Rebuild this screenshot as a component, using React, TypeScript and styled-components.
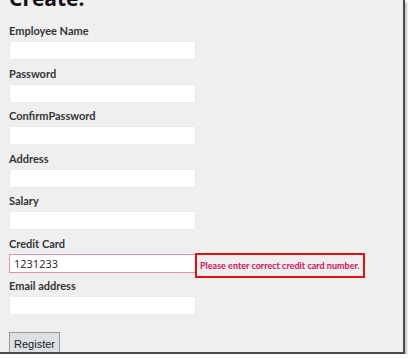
import styled, { createGlobalStyle } from 'styled-components';

const GlobalStyle = createGlobalStyle`
  html, body {
    margin: 0;
    padding: 0;
    background: #ffffff;
  }
  body {
    font-family: 'Lato', 'Liberation Sans', sans-serif;
    overflow: hidden;
  }
`;

const Frame = styled.div`
  width: 405px;
  height: 354px;
  box-sizing: border-box;
  background: #efefef;
  border-right: 2px solid #4a4a4a;
  border-bottom: 2px solid #4a4a4a;
  box-shadow: 2px 2px 2px rgba(0, 0, 0, 0.25);
  padding-left: 9px;
  overflow: hidden;
`;

const Title = styled.h2`
  margin: -15px 0 12px;
  font-family: 'Open Sans', 'Liberation Sans', sans-serif;
  font-size: 21px;
  line-height: 26px;
  font-weight: 700;
  color: #111;
`;

const Form = styled.form`
  display: flex;
  flex-direction: column;
`;

const Field = styled.div`
  display: flex;
  flex-direction: column;
  gap: 2px;
  margin-bottom: 5.5px;
`;

const Label = styled.label`
  font-size: 11px;
  line-height: 16px;
  font-weight: 700;
  color: #353535;
`;

// fixed height so the error message hangs below without pushing the next field
const Row = styled.div`
  display: flex;
  align-items: flex-start;
  height: 19px;
`;

const Input = styled.input<{ $invalid?: boolean }>`
  width: 187px;
  height: 19px;
  box-sizing: border-box;
  margin: 0;
  padding: 0 4px;
  background: #fff;
  border: 1px solid ${(p) => (p.$invalid ? '#e993a8' : '#ebebeb')};
  font-family: 'Open Sans', 'Liberation Sans', sans-serif;
  font-size: 11px;
  color: #222;
  outline: none;
`;

const ErrorBox = styled.span`
  flex: none;
  margin-left: -1px;
  margin-top: -1px;
  box-sizing: border-box;
  width: 170px;
  height: 25px;
  display: flex;
  align-items: center;
  padding-left: 3px;
  border: 2px solid #e01010;
  font-size: 9px;
  font-weight: 700;
  color: #d8105a;
  white-space: nowrap;
`;

const Button = styled.button`
  margin-top: 11.5px;
  align-self: flex-start;
  width: 51px;
  height: 24px;
  box-sizing: border-box;
  padding: 0;
  background: #dde1e4;
  border: 1px solid #9a9a9a;
  font-family: 'Liberation Sans', Arial, sans-serif;
  font-size: 11px;
  color: #222;
`;

const fields = [
  { label: 'Employee Name' },
  { label: 'Password' },
  { label: 'ConfirmPassword' },
  { label: 'Address' },
  { label: 'Salary' },
  { label: 'Credit Card', value: '1231233', error: 'Please enter correct credit card number.' },
  { label: 'Email address' },
];

const App = () => {
  return (
    <>
      <GlobalStyle />
      <Frame>
        <Title>Create.</Title>
        <Form onSubmit={(e) => e.preventDefault()}>
          {fields.map((f) => (
            <Field key={f.label}>
              <Label>{f.label}</Label>
              <Row>
                <Input $invalid={!!f.error} defaultValue={f.value} readOnly />
                {f.error && <ErrorBox>{f.error}</ErrorBox>}
              </Row>
            </Field>
          ))}
          <Button type="submit">Register</Button>
        </Form>
      </Frame>
    </>
  );
};

export default App;
